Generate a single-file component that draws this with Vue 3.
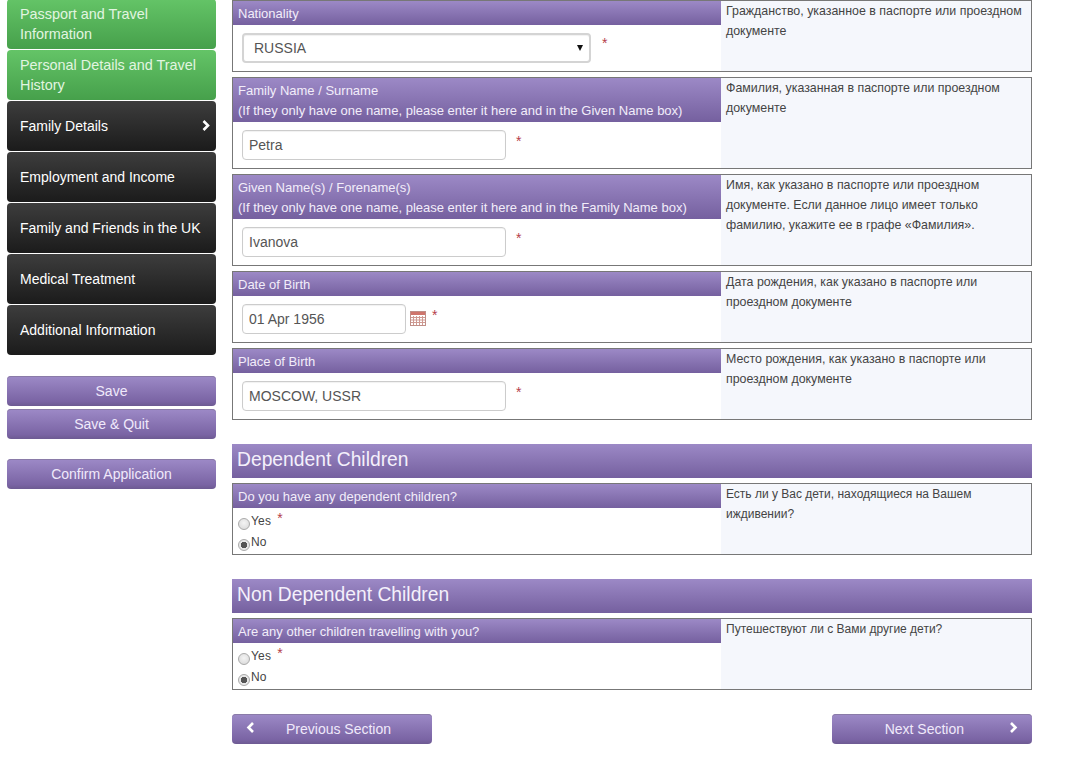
<script setup>
const doneSteps = [
  'Passport and Travel Information',
  'Personal Details and Travel History',
]
const todoSteps = [
  { label: 'Family Details', current: true },
  { label: 'Employment and Income' },
  { label: 'Family and Friends in the UK' },
  { label: 'Medical Treatment' },
  { label: 'Additional Information' },
]
const personRows = [
  { lines: ['Nationality'], kind: 'select', value: 'RUSSIA', help: 'Гражданство, указанное в паспорте или проездном документе' },
  { lines: ['Family Name / Surname', '(If they only have one name, please enter it here and in the Given Name box)'], kind: 'text', value: 'Petra', help: 'Фамилия, указанная в паспорте или проездном документе' },
  { lines: ['Given Name(s) / Forename(s)', '(If they only have one name, please enter it here and in the Family Name box)'], kind: 'text', value: 'Ivanova', help: 'Имя, как указано в паспорте или проездном документе. Если данное лицо имеет только фамилию, укажите ее в графе «Фамилия».' },
  { lines: ['Date of Birth'], kind: 'date', value: '01 Apr 1956', help: 'Дата рождения, как указано в паспорте или проездном документе' },
  { lines: ['Place of Birth'], kind: 'text', value: 'MOSCOW, USSR', help: 'Место рождения, как указано в паспорте или проездном документе' },
]
const childSections = [
  { title: 'Dependent Children', name: 'dep', question: 'Do you have any dependent children?', help: 'Есть ли у Вас дети, находящиеся на Вашем иждивении?' },
  { title: 'Non Dependent Children', name: 'nondep', question: 'Are any other children travelling with you?', help: 'Путешествуют ли с Вами другие дети?' },
]
</script>

<template>
  <div class="page">
    <aside class="sidebar">
      <nav class="steps">
        <a v-for="s in doneSteps" :key="s" class="step done">{{ s }}</a>
        <a v-for="s in todoSteps" :key="s.label" class="step todo">
          <span>{{ s.label }}</span>
          <svg v-if="s.current" class="chev-side" viewBox="0 0 10 12"><path d="M2.5 1.5 7 6l-4.500 4.500" /></svg>
        </a>
      </nav>
      <div class="actions">
        <button class="btn">Save</button>
        <button class="btn">Save &amp; Quit</button>
        <button class="btn confirm">Confirm Application</button>
      </div>
    </aside>

    <main class="main">
      <section class="rows">
        <div v-for="r in personRows" :key="r.lines[0]" class="row">
          <div class="left">
            <div class="label">
              <div v-for="l in r.lines" :key="l">{{ l }}</div>
            </div>
            <div class="field">
              <div v-if="r.kind === 'select'" class="select-wrap">
                <select class="control select"><option>{{ r.value }}</option></select>
                <i class="arrow"></i>
              </div>
              <input v-else :value="r.value" class="control" :class="r.kind === 'date' ? 'date' : 'text'" readonly />
              <svg v-if="r.kind === 'date'" class="cal" viewBox="0 0 16 15">
                <rect x="0.500" y="0.500" width="15" height="14" fill="#fff" stroke="#c08f88" />
                <rect x="1" y="1" width="14" height="3" fill="#cf756c" />
                <path d="M1 6.500h14M1 9h14M1 11.500h14M3.500 5v9M6.500 5v9M9.500 5v9M12.500 5v9" stroke="#cf9a92" fill="none" />
              </svg>
              <span class="star" :class="'star-' + r.kind">*</span>
            </div>
          </div>
          <div class="help">{{ r.help }}</div>
        </div>
      </section>

      <section v-for="c in childSections" :key="c.name" class="child">
        <h2 class="heading">{{ c.title }}</h2>
        <div class="row">
          <div class="left">
            <div class="label"><div>{{ c.question }}</div></div>
            <div class="radios">
              <label class="radio-line">
                <input type="radio" :name="c.name" class="radio" />Yes<span class="star radio-star">*</span>
              </label>
              <label class="radio-line">
                <input type="radio" :name="c.name" class="radio" checked />No
              </label>
            </div>
          </div>
          <div class="help help-small">{{ c.help }}</div>
        </div>
      </section>

      <div class="pager">
        <button class="btn page-btn prev">
          <svg class="chev" viewBox="0 0 10 12"><path d="M7 1.500 2.500 6 7 10.500" /></svg>
          <span>Previous Section</span>
        </button>
        <button class="btn page-btn next">
          <span>Next Section</span>
          <svg class="chev" viewBox="0 0 10 12"><path d="M3 1.500 7.500 6 3 10.500" /></svg>
        </button>
      </div>
    </main>
  </div>
</template>

<style>
html, body { background: #fff; }
</style>

<style scoped>
.page {
  display: flex;
  gap: 16px;
  width: 1076px;
  height: 760px;
  padding-left: 7px;
  box-sizing: border-box;
  overflow: hidden;
  font-family: "Liberation Sans", Arial, sans-serif;
  color: #444;
}
.sidebar { width: 209px; flex: none; margin-top: -1px; }
.steps { display: flex; flex-direction: column; gap: 1px; }
.step {
  display: flex;
  align-items: center;
  justify-content: space-between;
  height: 50px;
  box-sizing: border-box;
  padding: 0 5px 0 13px;
  border-radius: 4px;
  font-size: 14px;
  line-height: 20px;
}
.done {
  background: linear-gradient(#64c467, #46a04b);
  color: #e2f5e0;
  font-size: 14.4px;
}
.todo {
  background: linear-gradient(#3d3d3d, #1b1b1b);
  color: #fff;
}
.chev-side { width: 10px; height: 13px; margin-top: -2px; }
.chev-side path, .chev path {
  fill: none;
  stroke: #fff;
  stroke-width: 2.600;
}
.actions {
  display: flex;
  flex-direction: column;
  gap: 3px;
  margin-top: 21px;
}
.btn {
  height: 30px;
  padding: 0;
  border: 0;
  border-radius: 4px;
  background: linear-gradient(#9d8ac7, #7a64a4 85%, #6d5a92);
  color: #f0e9fb;
  font: 14px "Liberation Sans", Arial, sans-serif;
  box-shadow: inset 0 1px 0 #8a7ba8;
}
.confirm { margin-top: 17px; }

.main { width: 800px; flex: none; }
.rows { display: flex; flex-direction: column; gap: 5px; }
.row {
  display: flex;
  border: 1px solid #777;
  background: #fff;
}
.left { width: 488px; flex: none; }
.label {
  padding: 3px 5px 1px;
  background: linear-gradient(#9c89c6, #75609f);
  color: #f2edfa;
  font-size: 13px;
  line-height: 20px;
}
.help {
  flex: 1;
  padding: 0 5px;
  background: #f5f7fc;
  color: #444;
  font-size: 12.4px;
  line-height: 20px;
}
.help-small { font-size: 12px; }
.field {
  display: flex;
  align-items: flex-start;
  height: 46px;
  padding: 8px 0 0 9px;
  box-sizing: border-box;
}
.control {
  height: 30px;
  flex: none;
  box-sizing: border-box;
  border: 1px solid #ccc;
  border-radius: 4px;
  padding: 0 6px;
  background: #fff;
  color: #555;
  font: 14px "Liberation Sans", Arial, sans-serif;
  box-shadow: inset 0 1px 1px rgba(0, 0, 0, .06);
  outline: none;
}
.text { width: 264px; }
.date { width: 164px; }
.select-wrap { display: flex; align-items: center; width: 349px; flex: none; }
.select {
  width: 100%;
  appearance: none;
  padding-left: 10px;
  border-width: 2px;
  border-color: #d4d4d4;
}
.arrow {
  width: 0;
  height: 0;
  flex: none;
  margin-left: -14px;
  border-left: 3px solid transparent;
  border-right: 3px solid transparent;
  border-top: 6px solid #111;
}
.cal { width: 16px; height: 15px; margin: 7px 0 0 4px; flex: none; }
.star {
  color: #b5404a;
  font-size: 14px;
  line-height: 16px;
  margin: 3px 0 0 10px;
}
.star-date { margin-left: 6px; }
.star-select { margin-left: 11px; margin-top: 2px; }
.radios {
  display: flex;
  flex-direction: column;
  gap: 1px;
  height: 46px;
  padding-top: 3px;
  box-sizing: border-box;
}
.radio-line {
  display: flex;
  align-items: center;
  height: 20px;
  padding-left: 5px;
  font-size: 12px;
  letter-spacing: .2px;
  color: #444;
}
.radio {
  appearance: none;
  width: 12px;
  height: 12px;
  margin: 5px 1px 0 0;
  border: 1px solid #aaa;
  border-radius: 50%;
  background: radial-gradient(circle at 50% 40%, #f4f4f4, #d6d6d6);
}
.radio:checked {
  background: radial-gradient(circle, #555 0 3px, #e8e8e8 3.500px);
}
.radio-star { margin: -7px 0 0 6px; }

.child { margin-top: 24px; }
.heading {
  margin: 0 0 5px;
  height: 34px;
  padding-left: 5px;
  background: linear-gradient(#9c89c6, #75609f);
  color: #f4f0fb;
  font-size: 19.3px;
  font-weight: 400;
  line-height: 32px;
}
.pager {
  display: flex;
  justify-content: space-between;
  margin-top: 24px;
}
.page-btn {
  display: flex;
  align-items: center;
  width: 200px;
}
.prev { padding-left: 14px; gap: 30px; }
.next { justify-content: flex-end; padding-right: 14px; gap: 44px; }
.chev { width: 10px; height: 13px; margin-top: -3px; }
</style>
